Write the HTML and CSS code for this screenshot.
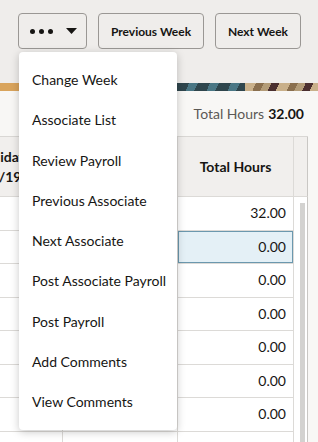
FILE: index.html
```html
<!DOCTYPE html>
<html lang="en">
<head>
    <meta charset="UTF-8">
    <meta name="viewport" content="width=device-width, initial-scale=1.0">
    <title>Timecard</title>
    <link rel="stylesheet" href="styles.css">
</head>
<body>
    <div class="top">
        <button class="btn more" aria-label="More actions">
            <span class="dots"><i></i><i></i><i></i></span>
            <svg class="caret" width="11" height="6" viewBox="0 0 11 6"><path d="M0 0h11L5.5 6z" fill="#161513"/></svg>
        </button>
        <button class="btn prev">Previous Week</button>
        <button class="btn next">Next Week</button>
    </div>

    <div class="band">
        <div class="band-a"></div>
        <div class="band-b"></div>
        <div class="band-c"></div>
    </div>

    <div class="main">
        <div class="summary">Total Hours <b>32.00</b></div>

        <div class="grid">
            <div class="head">
                <div class="cell hcell first">Holiday<br>07/19</div>
                <div class="cell hcell"></div>
                <div class="cell hcell">Total Hours</div>
                <div class="cell hcorner"></div>
            </div>
            <div class="body">
                <div class="rows">
                    <div class="row"><div class="cell"></div><div class="cell"></div><div class="cell num">32.00</div></div>
                    <div class="row"><div class="cell"></div><div class="cell"></div><div class="cell num selected">0.00</div></div>
                    <div class="row"><div class="cell"></div><div class="cell"></div><div class="cell num">0.00</div></div>
                    <div class="row"><div class="cell"></div><div class="cell"></div><div class="cell num">0.00</div></div>
                    <div class="row"><div class="cell"></div><div class="cell"></div><div class="cell num">0.00</div></div>
                    <div class="row"><div class="cell"></div><div class="cell"></div><div class="cell num">0.00</div></div>
                    <div class="row"><div class="cell"></div><div class="cell"></div><div class="cell num">0.00</div></div>
                    <div class="row"><div class="cell"></div><div class="cell"></div><div class="cell num"></div></div>
                </div>
                <div class="scroll"><div class="thumb"></div></div>
            </div>
        </div>
    </div>

    <ul class="menu">
        <li>Change Week</li>
        <li>Associate List</li>
        <li>Review Payroll</li>
        <li>Previous Associate</li>
        <li>Next Associate</li>
        <li>Post Associate Payroll</li>
        <li>Post Payroll</li>
        <li>Add Comments</li>
        <li>View Comments</li>
    </ul>
</body>
</html>
```

FILE: styles.css
```css
body {
    margin: 0;
    font-family: 'Lato', sans-serif;
    color: #161513;
    background: #f8f7f5;
    overflow: hidden;
}
.top {
    height: 83px;
    box-sizing: border-box;
    padding: 13px 0 0 18px;
    display: flex;
    gap: 11px;
    background: #efedeb;
}
.btn {
    height: 36px;
    box-sizing: border-box;
    border: 1px solid #9a9794;
    border-radius: 4px;
    background: #efedeb;
    font-family: 'Lato', sans-serif;
    font-size: 12px;
    font-weight: 700;
    color: #161513;
    padding: 0;
}
.more {
    width: 69px;
    display: flex;
    align-items: center;
    padding-left: 11px;
    gap: 13px;
}
.dots { display: flex; gap: 4px; }
.dots i {
    width: 5px;
    height: 5px;
    border-radius: 50%;
    background: #161513;
}
.prev { width: 106px; }
.next { width: 86px; }

.band { height: 8px; display: flex; }
.band-a { width: 177px; background: #d9a45c; }
.band-b {
    width: 68px;
    background: repeating-linear-gradient(115deg, #2f464d 0 11px, #4a7785 11px 19px);
}
.band-c {
    flex: 1;
    background: repeating-linear-gradient(115deg, #c9b08a 0 10px, #8a6f4e 10px 17px, #b39c78 17px 24px, #4b2f2f 24px 31px);
}

.summary {
    height: 45px;
    display: flex;
    align-items: center;
    justify-content: flex-end;
    padding-right: 14px;
    font-size: 14px;
    color: #5b5955;
}
.summary b { color: #161513; margin-left: 4px; }

.grid {
    margin-left: -64px;
    width: 372px;
}
.head {
    display: grid;
    grid-template-columns: 127px 115px 116px 14px;
    height: 61px;
    background: #f1efed;
    border-top: 1px solid #d9d7d4;
    box-sizing: border-box;
}
.cell {
    border-right: 1px solid #dcdad7;
    border-bottom: 1px solid #dcdad7;
    box-sizing: border-box;
}
.hcell {
    display: flex;
    align-items: center;
    justify-content: center;
    text-align: center;
    font-size: 14px;
    font-weight: 700;
    line-height: 20px;
}
.hcell.first { padding-left: 6px; }
.hcorner { border-right: 1px solid #c9c7c4; }
.body { display: flex; }
.rows { width: 358px; background: #fff; }
.row {
    display: grid;
    grid-template-columns: 127px 115px 116px;
    height: 33.5px;
}
.num {
    text-align: right;
    padding-right: 7px;
    font-size: 14px;
    line-height: 32px;
}
.selected {
    background: #e4f0f6;
    box-shadow: inset 0 0 0 1px #6b98ae;
}
.scroll {
    width: 14px;
    box-sizing: border-box;
    background: #fff;
    border-right: 1px solid #c9c7c4;
    padding: 6px 2px 0 6px;
}
.thumb {
    height: 300px;
    background: #d3d2d0;
}

.menu {
    position: absolute;
    left: 19px;
    top: 52px;
    width: 158px;
    margin: 0;
    padding: 8px 0;
    list-style: none;
    background: #fff;
    border-radius: 4px;
    box-shadow: 0 2px 8px rgba(0, 0, 0, 0.22);
}
.menu li {
    height: 40.25px;
    line-height: 40px;
    padding-left: 13px;
    font-size: 14px;
    white-space: nowrap;
}
```
